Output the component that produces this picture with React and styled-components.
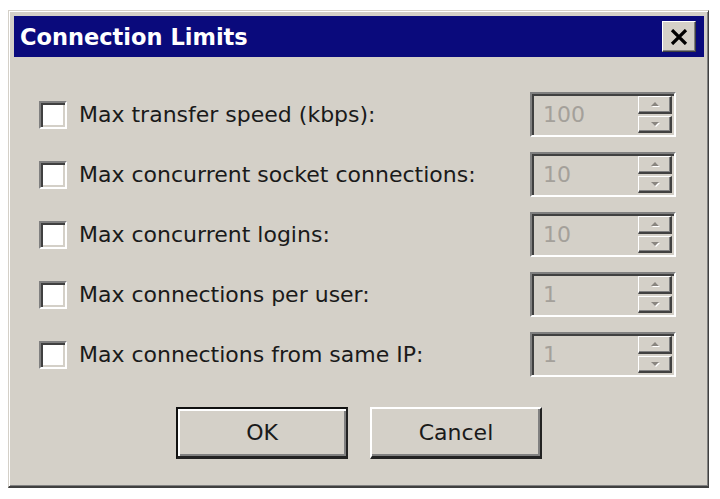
import React from 'react'
import styled, { createGlobalStyle } from 'styled-components'

const GlobalStyle = createGlobalStyle`
  html, body {
    margin: 0;
    padding: 0;
    background: #ffffff;
  }
  body {
    font-family: "DejaVu Sans", Tahoma, sans-serif;
  }
`

const Page = styled.div`
  width: 720px;
  height: 499px;
  padding: 10px 0 0 8px;
  box-sizing: border-box;
`

const Dialog = styled.div`
  width: 701px;
  height: 478px;
  box-sizing: border-box;
  background: #d4d0c8;
  border-top: 1px solid #d4d0c8;
  border-left: 1px solid #d4d0c8;
  border-right: 1px solid #404040;
  border-bottom: 2px solid #404040;
  box-shadow: inset 1px 1px 0 #ffffff, inset -1px -1px 0 #808080;
  padding: 5px 4px 4px 5px;
  display: flex;
  flex-direction: column;
`

const TitleBar = styled.div`
  height: 41px;
  background: #0a0a7c;
  display: flex;
  align-items: center;
  justify-content: space-between;
  padding: 0 8px 0 6px;
`

const Title = styled.span`
  color: #ffffff;
  font-weight: bold;
  font-size: 22.5px;
`

const CloseButton = styled.div`
  width: 34px;
  height: 31px;
  box-sizing: border-box;
  background: #d4d0c8;
  border-top: 1px solid #ffffff;
  border-left: 1px solid #ffffff;
  border-right: 1px solid #404040;
  border-bottom: 1px solid #404040;
  box-shadow: inset -1px -1px 0 #808080;
  display: flex;
  align-items: center;
  justify-content: center;
`

const Body = styled.div`
  flex: 1;
  display: flex;
  flex-direction: column;
  padding: 35px 28px 0 25px;
`

const Rows = styled.div`
  display: flex;
  flex-direction: column;
  gap: 15px;
`

const Row = styled.div`
  height: 45px;
  display: flex;
  align-items: center;
`

const Check = styled.div`
  width: 28px;
  height: 28px;
  box-sizing: border-box;
  background: #ffffff;
  border-top: 2px solid #808080;
  border-left: 2px solid #808080;
  border-right: 2px solid #ffffff;
  border-bottom: 2px solid #ffffff;
  box-shadow: inset 2px 2px 0 #404040, inset -2px -2px 0 #d4d0c8;
  margin-top: 1px;
`

const Label = styled.span`
  flex: 1;
  margin-left: 12px;
  font-size: 22px;
  color: #1a1a1a;
`

const Spinner = styled.div`
  width: 146px;
  height: 45px;
  box-sizing: border-box;
  background: #d4d0c8;
  border-top: 2px solid #808080;
  border-left: 2px solid #808080;
  border-right: 2px solid #ffffff;
  border-bottom: 2px solid #ffffff;
  box-shadow: inset 2px 2px 0 #404040, inset -2px -2px 0 #d4d0c8;
  display: flex;
  align-items: stretch;
  padding: 2px 2px 2px 2px;
`

const SpinValue = styled.span`
  flex: 1;
  display: flex;
  align-items: center;
  padding-left: 9px;
  font-size: 22px;
  color: #a4a09a;
`

const SpinButtons = styled.div`
  width: 34px;
  display: flex;
  flex-direction: column;
  gap: 2px;
`

const SpinButton = styled.div`
  flex: 1;
  box-sizing: border-box;
  background: #d4d0c8;
  border-top: 1px solid #ffffff;
  border-left: 1px solid #ffffff;
  border-right: 2px solid #404040;
  border-bottom: 2px solid #404040;
  box-shadow: inset -1px -1px 0 #808080;
  display: flex;
  align-items: center;
  justify-content: center;
`

const Footer = styled.div`
  display: flex;
  justify-content: center;
  gap: 22px;
  margin-top: 30px;
  padding-left: 3px;
`

const Button = styled.div`
  width: 172px;
  height: 52px;
  box-sizing: border-box;
  background: #d4d0c8;
  display: flex;
  align-items: center;
  justify-content: center;
  font-size: 22px;
  color: #1a1a1a;
  border-top: ${(p) => (p.$default ? '2px solid #111111' : '2px solid #ffffff')};
  border-left: ${(p) => (p.$default ? '2px solid #111111' : '2px solid #ffffff')};
  border-right: 2px solid #222222;
  border-bottom: 3px solid #222222;
  box-shadow: ${(p) =>
    p.$default
      ? 'inset 2px 2px 0 #ffffff, inset -2px -2px 0 #808080'
      : 'inset -2px -2px 0 #808080'};
`

function Arrow({ up }) {
  const d = up ? 'M2 6 L6 2 L10 6 Z' : 'M2 2 L6 6 L10 2 Z'
  return (
    <svg width="12" height="8" viewBox="0 0 12 8">
      <path d={d} fill="#ffffff" transform="translate(1,1)" />
      <path d={d} fill="#8a8680" />
    </svg>
  )
}

const limits = [
  { label: 'Max transfer speed (kbps):', value: '100' },
  { label: 'Max concurrent socket connections:', value: '10' },
  { label: 'Max concurrent logins:', value: '10' },
  { label: 'Max connections per user:', value: '1' },
  { label: 'Max connections from same IP:', value: '1' },
]

export default function App() {
  return (
    <>
      <GlobalStyle />
      <Page>
        <Dialog>
          <TitleBar>
            <Title>Connection Limits</Title>
            <CloseButton>
              <svg width="18" height="16" viewBox="0 0 18 16">
                <path d="M2 1 L16 15 M16 1 L2 15" stroke="#000" strokeWidth="3.2" />
              </svg>
            </CloseButton>
          </TitleBar>
          <Body>
            <Rows>
              {limits.map((l) => (
                <Row key={l.label}>
                  <Check />
                  <Label>{l.label}</Label>
                  <Spinner>
                    <SpinValue>{l.value}</SpinValue>
                    <SpinButtons>
                      <SpinButton><Arrow up /></SpinButton>
                      <SpinButton><Arrow /></SpinButton>
                    </SpinButtons>
                  </Spinner>
                </Row>
              ))}
            </Rows>
            <Footer>
              <Button $default>OK</Button>
              <Button>Cancel</Button>
            </Footer>
          </Body>
        </Dialog>
      </Page>
    </>
  )
}
